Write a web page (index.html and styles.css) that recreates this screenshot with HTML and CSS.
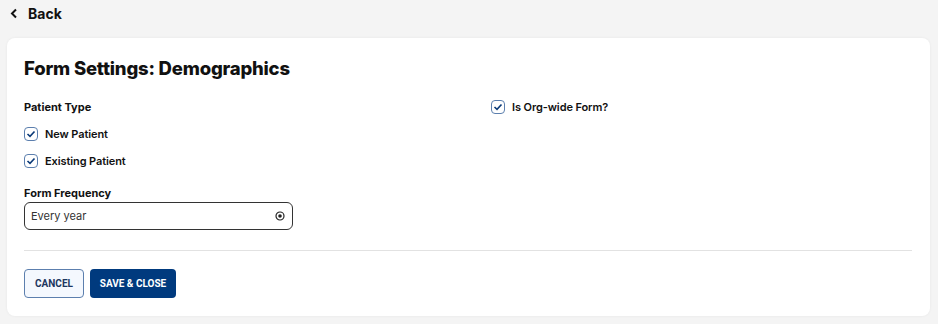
FILE: index.html
```html
<!DOCTYPE html>
<html lang="en">
<head>
    <meta charset="UTF-8">
    <title>Form Settings</title>
    <link rel="stylesheet" href="styles.css">
</head>
<body>

<header class="topbar">
    <a class="back-link" href="#">
        <svg width="8" height="11" viewBox="0 0 8 11"><path d="M6 1.5 L2 5.5 L6 9.5" fill="none" stroke="#111" stroke-width="2"/></svg>
        <span>Back</span>
    </a>
</header>

<main class="card">
    <h1 class="card-title">Form Settings: Demographics</h1>

    <div class="settings-grid">
        <div class="col">
            <div class="field-label type-label">Patient Type</div>
            <label class="check-row">
                <span class="check-box"><svg width="10" height="8" viewBox="0 0 10 8"><path d="M1.5 4 L4 6.3 L8.5 1.5" fill="none" stroke="#0b3a78" stroke-width="1.6"/></svg></span>
                New Patient
            </label>
            <label class="check-row">
                <span class="check-box"><svg width="10" height="8" viewBox="0 0 10 8"><path d="M1.5 4 L4 6.3 L8.5 1.5" fill="none" stroke="#0b3a78" stroke-width="1.6"/></svg></span>
                Existing Patient
            </label>

            <div class="field-label freq-label">Form Frequency</div>
            <div class="select-box">
                <span>Every year</span>
                <svg width="10" height="10" viewBox="0 0 10 10"><circle cx="5" cy="5" r="4" fill="none" stroke="#222" stroke-width="1.2"/><circle cx="5" cy="5" r="1.8" fill="#222"/></svg>
            </div>
        </div>
        <div class="col">
            <label class="check-row org-row">
                <span class="check-box"><svg width="10" height="8" viewBox="0 0 10 8"><path d="M1.5 4 L4 6.3 L8.5 1.5" fill="none" stroke="#0b3a78" stroke-width="1.6"/></svg></span>
                Is Org-wide Form?
            </label>
        </div>
    </div>

    <hr class="divider">

    <div class="actions">
        <button class="btn btn-outline">Cancel</button>
        <button class="btn btn-primary">Save &amp; Close</button>
    </div>
</main>

</body>
</html>
```

FILE: styles.css
```css
body {
    margin: 0;
    padding: 0 8px 8px 7px;
    background-color: #f4f4f4;
    font-family: Inter, "Noto Sans", sans-serif;
    color: #111;
}
.topbar {
    height: 38px;
    display: flex;
    align-items: center;
    padding-left: 3px;
}
.back-link {
    display: flex;
    align-items: center;
    gap: 10px;
    text-decoration: none;
    color: #111;
    font-weight: 700;
    font-size: 14px;
    margin-top: -12px;
}
.card {
    background-color: white;
    border-radius: 8px;
    padding: 19px 18px 18px 17px;
    box-shadow: 0 0 3px rgba(0, 0, 0, 0.06);
}
.card-title {
    margin: 0 0 21px;
    font-size: 18.5px;
    font-weight: 800;
    letter-spacing: -0.2px;
}
.settings-grid {
    display: grid;
    grid-template-columns: 421px 1fr;
    gap: 46px;
}
.field-label {
    font-size: 11px;
    font-weight: 700;
}
.type-label {
    margin-bottom: 13px;
}
.freq-label {
    margin-top: 18px;
    margin-bottom: 2px;
}
.check-row {
    display: flex;
    align-items: center;
    gap: 7px;
    font-size: 11px;
    font-weight: 600;
    letter-spacing: -0.1px;
    height: 14px;
    margin-bottom: 13px;
}
.org-row {
    margin-top: 0;
}
.check-box {
    width: 12px;
    height: 12px;
    border: 1.5px solid #5c7fae;
    border-radius: 4px;
    display: flex;
    align-items: center;
    justify-content: center;
}
.select-box {
    box-sizing: border-box;
    width: 269px;
    height: 28px;
    border: 1px solid #333;
    border-radius: 6px;
    display: flex;
    align-items: center;
    justify-content: space-between;
    padding: 0 7px 0 6px;
    font-size: 11px;
    color: #333;
}
.divider {
    border: none;
    border-top: 1.5px solid #e2e2e2;
    margin: 20px 0 18px;
}
.actions {
    display: flex;
    gap: 6px;
}
.btn {
    height: 29px;
    border-radius: 4px;
    font-family: Roboto, sans-serif;
    font-size: 10px;
    font-weight: 700;
    text-transform: uppercase;
    cursor: pointer;
}
.btn-outline {
    width: 60px;
    background-color: #f4f8fe;
    border: 1px solid #5c7fae;
    color: #1c3660;
}
.btn-primary {
    width: 86px;
    background-color: #003a7e;
    border: none;
    color: white;
}
```
